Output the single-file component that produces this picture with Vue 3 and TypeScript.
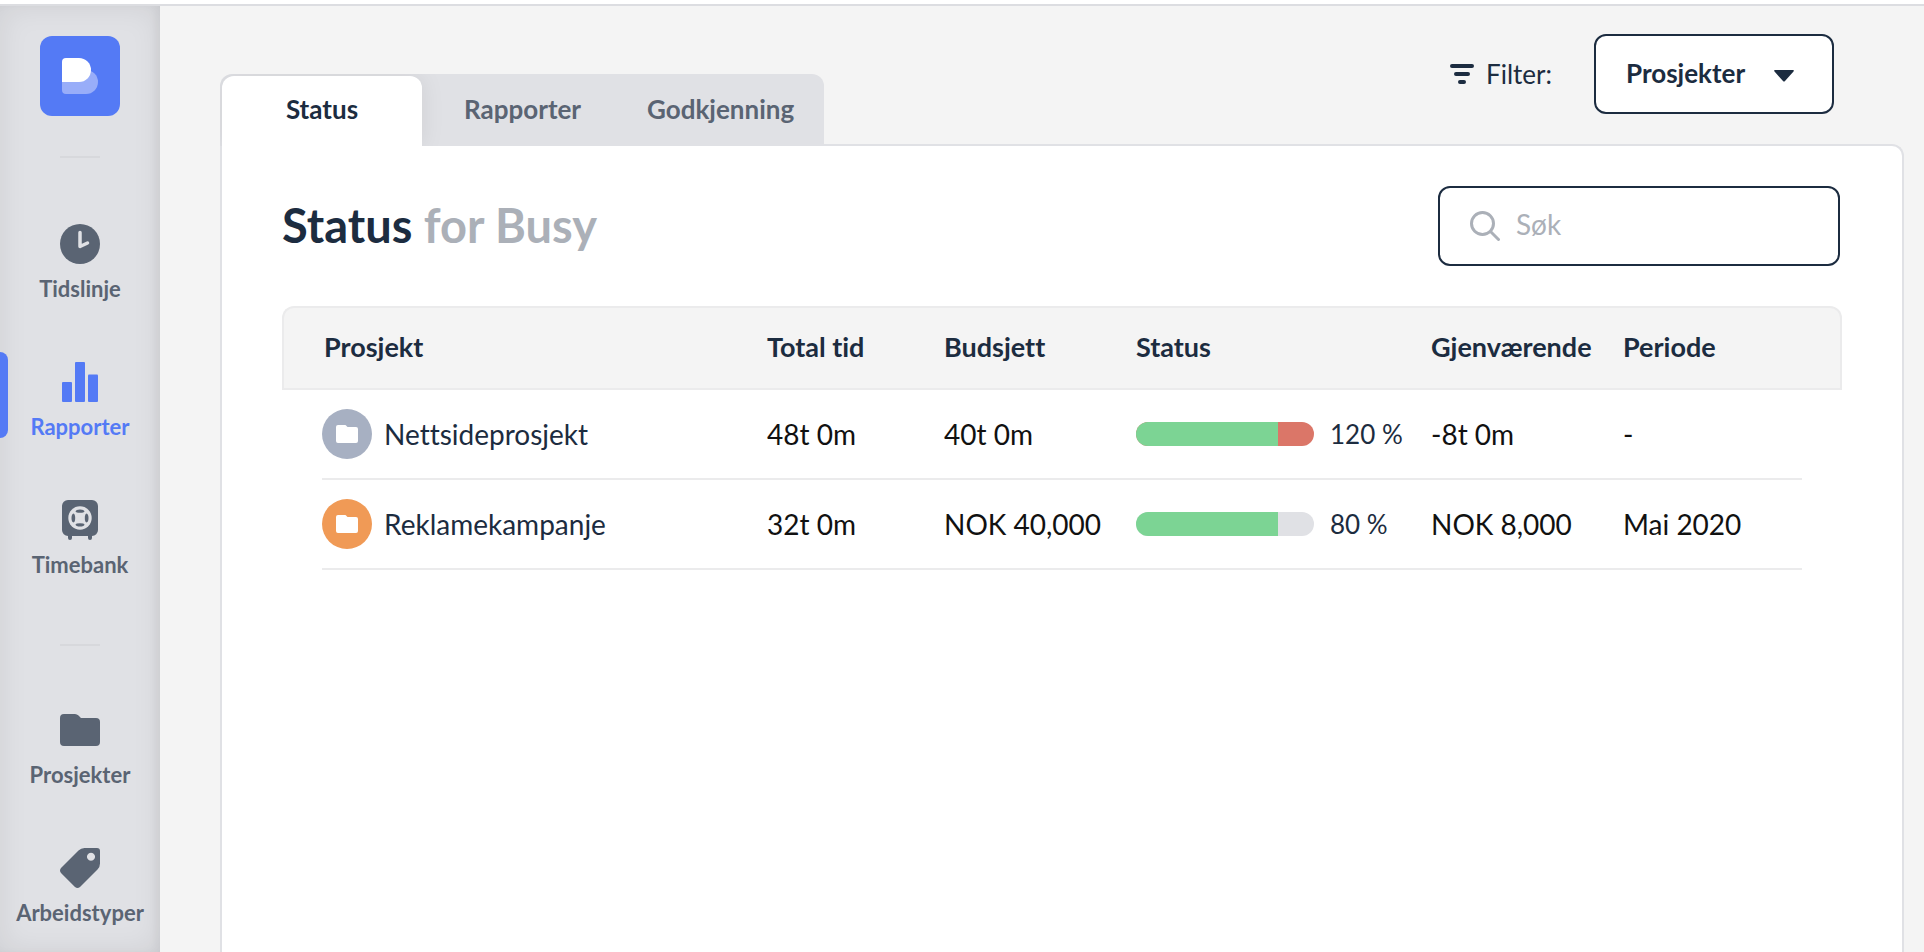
<script setup lang="ts">
import { ref } from 'vue'

interface NavItem {
  label: string
  icon: 'clock' | 'chart' | 'safe' | 'folder' | 'tag'
}

interface Project {
  name: string
  tone: 'slate' | 'orange'
  total: string
  budget: string
  percent: number
  remaining: string
  period: string
}

const navGroups: NavItem[][] = [
  [
    { label: 'Tidslinje', icon: 'clock' },
    { label: 'Rapporter', icon: 'chart' },
    { label: 'Timebank', icon: 'safe' },
  ],
  [
    { label: 'Prosjekter', icon: 'folder' },
    { label: 'Arbeidstyper', icon: 'tag' },
  ],
]

const activeNav = ref('Rapporter')
const tabs = ['Status', 'Rapporter', 'Godkjenning']
const activeTab = ref('Status')
const filter = ref('Prosjekter')
const search = ref('')

const projects: Project[] = [
  { name: 'Nettsideprosjekt', tone: 'slate', total: '48t 0m', budget: '40t 0m', percent: 120, remaining: '-8t 0m', period: '-' },
  { name: 'Reklamekampanje', tone: 'orange', total: '32t 0m', budget: 'NOK 40,000', percent: 80, remaining: 'NOK 8,000', period: 'Mai 2020' },
]

/* Over budget, the excess is shown in red at the end of the bar. */
const filled = (percent: number): number => (percent > 100 ? 200 - percent : percent)
</script>

<template>
  <div class="app">
    <aside class="sidebar">
      <a class="logo" href="#" aria-label="Busy">
        <svg viewBox="0 0 80 80" width="80" height="80" aria-hidden="true">
          <path d="M46 34a12 12 0 0 1 0 24H26a4 4 0 0 1-4-4V34z" fill="#98adf9" />
          <path d="M26 22h13a12 12 0 0 1 0 24H22V26a4 4 0 0 1 4-4z" fill="#fff" />
        </svg>
      </a>
      <nav class="nav">
        <div v-for="(group, g) in navGroups" :key="g" class="nav-group">
          <a
            v-for="item in group"
            :key="item.label"
            href="#"
            class="nav-item"
            :class="{ active: item.label === activeNav }"
            @click.prevent="activeNav = item.label"
          >
            <svg viewBox="0 0 40 40" width="40" height="40" aria-hidden="true">
              <template v-if="item.icon === 'clock'">
                <circle cx="20" cy="20" r="20" fill="currentColor" />
                <path d="M20 8.500V22.500L27.500 19" fill="none" stroke="#e0e1e5" stroke-width="3.500" stroke-linecap="round" stroke-linejoin="round" />
              </template>
              <g v-else-if="item.icon === 'chart'" fill="currentColor">
                <rect x="2" y="20" width="10" height="20" rx="1" />
                <rect x="15" y="0" width="10" height="40" rx="1" />
                <rect x="28" y="12.500" width="10" height="27.500" rx="1" />
              </g>
              <template v-else-if="item.icon === 'safe'">
                <path d="M8 0h24a6 6 0 0 1 6 6v24a6 6 0 0 1-6 6v2a2 2 0 0 1-4 0v-2H12v2a2 2 0 0 1-4 0v-2a6 6 0 0 1-6-6V6a6 6 0 0 1 6-6z" fill="currentColor" />
                <circle cx="20" cy="18" r="11.700" fill="#e0e1e5" />
                <g fill="currentColor">
                  <path d="M15.500 11.500Q16 9.500 20 9.500t4.500 2Q24 12.800 20 12.800t-4.500-1.300z" />
                  <path d="M15.500 24.500Q16 26.500 20 26.500t4.500-2Q24 23.200 20 23.200t-4.500 1.300z" />
                  <path d="M13.500 13.500Q11.500 14 11.500 18t2 4.500Q15.200 22 15.200 18t-1.700-4.500z" />
                  <path d="M26.500 13.500q2 .5 2 4.500t-2 4.500Q24.800 22 24.800 18t1.700-4.500z" />
                </g>
              </template>
              <path
                v-else-if="item.icon === 'folder'"
                d="M4 4h11q2 0 3.500 1.500L21 8h15a4 4 0 0 1 4 4v20a4 4 0 0 1-4 4H4a4 4 0 0 1-4-4V8a4 4 0 0 1 4-4z"
                fill="currentColor"
              />
              <path
                v-else
                fill="currentColor"
                fill-rule="evenodd"
                d="M24.500 0H37a3 3 0 0 1 3 3v12.500q0 3.500-2.500 6L20 39q-2.500 2-5 0L1 25q-2-2.500 0-5L18.500 2.500Q21 0 24.500 0zM31 4.800a4 4 0 1 0 .01 0z"
              />
            </svg>
            <span>{{ item.label }}</span>
          </a>
        </div>
      </nav>
    </aside>

    <main class="main">
      <header class="topbar">
        <div class="tabs" role="tablist">
          <button
            v-for="tab in tabs"
            :key="tab"
            type="button"
            role="tab"
            class="tab"
            :class="{ active: tab === activeTab }"
            :aria-selected="tab === activeTab"
            @click="activeTab = tab"
          >
            {{ tab }}
          </button>
        </div>
        <div class="filter">
          <label class="filter-label" for="filter">
            <svg viewBox="0 0 24 20" width="24" height="20" aria-hidden="true">
              <path d="M2 2h20M6 10h12M10 18h4" stroke="currentColor" stroke-width="4" stroke-linecap="round" />
            </svg>
            Filter:
          </label>
          <div class="select-box">
            <select id="filter" v-model="filter">
              <option>Prosjekter</option>
            </select>
            <svg class="caret" viewBox="0 0 20 12" width="20" height="12" aria-hidden="true">
              <path d="M1 0h18q1.500.5.500 1.500L11 11q-1 1-2 0L.500 1.500Q-.500.500 1 0z" fill="currentColor" />
            </svg>
          </div>
        </div>
      </header>

      <section class="panel">
        <div class="panel-head">
          <h1>Status <span>for Busy</span></h1>
          <label class="search">
            <svg viewBox="0 0 30 30" width="30" height="30" aria-hidden="true">
              <circle cx="12.500" cy="12.500" r="11" fill="none" stroke="currentColor" stroke-width="3" />
              <path d="M20.500 20.500l8 8" stroke="currentColor" stroke-width="3" stroke-linecap="round" />
            </svg>
            <input v-model="search" type="text" placeholder="Søk" aria-label="Søk" />
          </label>
        </div>

        <table>
          <colgroup>
            <col />
            <col class="col-total" />
            <col class="col-budget" />
            <col class="col-status" />
            <col class="col-remaining" />
            <col class="col-period" />
          </colgroup>
          <thead>
            <tr>
              <th scope="col">Prosjekt</th>
              <th scope="col">Total tid</th>
              <th scope="col">Budsjett</th>
              <th scope="col">Status</th>
              <th scope="col">Gjenværende</th>
              <th scope="col">Periode</th>
            </tr>
          </thead>
          <tbody>
            <tr v-for="project in projects" :key="project.name">
              <td>
                <div class="project">
                  <span class="badge" :class="project.tone">
                    <svg viewBox="0 0 22 18" width="22" height="18" aria-hidden="true">
                      <path d="M2 0h7q1 0 1.500 1l1 1H20a2 2 0 0 1 2 2v12a2 2 0 0 1-2 2H2a2 2 0 0 1-2-2V2a2 2 0 0 1 2-2z" fill="#fff" />
                    </svg>
                  </span>
                  {{ project.name }}
                </div>
              </td>
              <td>{{ project.total }}</td>
              <td>{{ project.budget }}</td>
              <td>
                <div class="status">
                  <div class="bar" :class="{ over: project.percent > 100 }">
                    <div class="bar-fill" :style="{ width: filled(project.percent) + '%' }"></div>
                  </div>
                  {{ project.percent }} %
                </div>
              </td>
              <td>{{ project.remaining }}</td>
              <td>{{ project.period }}</td>
            </tr>
          </tbody>
        </table>
      </section>
    </main>
  </div>
</template>

<style>
body {
  margin: 0;
  background: #fff;
}
</style>

<style scoped>
.app {
  box-sizing: border-box;
  display: flex;
  min-height: calc(100vh - 4px);
  margin-top: 4px;
  border-top: 2px solid #dcdde1;
  background: #f4f4f4;
  color: #1c2c40;
  font-family: Lato, "Open Sans", sans-serif;
  font-size: 28px;
  font-variant-ligatures: none;
}

.app *,
.app *::before {
  box-sizing: border-box;
}

.sidebar {
  display: flex;
  flex-direction: column;
  flex: 0 0 160px;
  align-items: center;
  padding-top: 30px;
  background: #e0e1e5;
  box-shadow:
    inset -6px 0 12px -4px rgba(0, 0, 0, 0.06),
    inset 0 0 30px rgba(0, 0, 0, 0.08);
}

.logo {
  display: block;
  height: 80px;
  border-radius: 12px;
  background: #547af5;
}

.nav {
  width: 100%;
}

.nav-group {
  display: flex;
  flex-direction: column;
  gap: 52px;
  padding-bottom: 28px;
}

.nav-group::before {
  content: "";
  align-self: center;
  width: 40px;
  height: 2px;
  margin: 40px 0 4px;
  background: #d7d8dc;
}

.nav-group + .nav-group::before {
  margin-bottom: 2px;
}

.nav-item {
  position: relative;
  display: flex;
  flex-direction: column;
  align-items: center;
  gap: 12px;
  height: 86px;
  padding-top: 10px;
  color: #5a6473;
  font-size: 22px;
  font-weight: 700;
  line-height: 26px;
  text-decoration: none;
}

.nav-item svg {
  flex: none;
}

.nav-item.active {
  color: #547af5;
}

.nav-item.active::before {
  content: "";
  position: absolute;
  top: 0;
  left: 0;
  width: 8px;
  height: 100%;
  border-radius: 0 8px 8px 0;
  background: #547af5;
}

.main {
  display: flex;
  flex: 1;
  flex-direction: column;
  min-width: 0;
  padding: 28px 20px 0 60px;
}

.topbar {
  display: flex;
  align-items: flex-start;
  justify-content: space-between;
  height: 112px;
}

/* The selected tab opens into the panel below it. */
.tabs {
  position: relative;
  z-index: 1;
  display: flex;
  align-self: flex-end;
  height: 72px;
  padding: 2px 0 0 2px;
  border-radius: 12px 12px 0 0;
  overflow: hidden;
  background: #e0e1e5;
}

.tab {
  padding: 0 30px 4px 28px;
  border: 0;
  background: none;
  color: #5a6473;
  font: inherit;
  font-size: 26px;
  font-weight: 700;
}

.tab:first-child {
  width: 200px;
  padding: 0 0 4px;
}

.tab:nth-child(2) {
  padding: 0 38px 4px 42px;
}

.tab.active {
  border-radius: 12px 12px 0 0;
  background: #fff;
  box-shadow: 0 0 24px rgba(0, 0, 0, 0.08);
  color: #1c2c40;
}

.filter {
  display: flex;
  align-items: center;
  gap: 42px;
  padding-right: 70px;
}

.filter-label {
  display: flex;
  align-items: center;
  gap: 12px;
  font-size: 26px;
}

.select-box {
  position: relative;
  width: 240px;
}

.select-box select {
  display: block;
  width: 100%;
  height: 80px;
  padding: 0 64px 2px 30px;
  border: 2px solid #1c2c40;
  border-radius: 12px;
  appearance: none;
  background: #fff;
  color: #1c2c40;
  font: inherit;
  font-size: 26px;
  font-weight: 700;
}

.caret {
  position: absolute;
  top: 36px;
  right: 40px;
  pointer-events: none;
}

.panel {
  flex: 1;
  margin-top: -2px;
  padding: 40px 60px 0;
  border: 2px solid #e0e1e5;
  border-bottom: 0;
  border-radius: 0 12px 0 0;
  background: #fff;
}

.panel-head {
  display: flex;
  align-items: center;
  justify-content: space-between;
  padding-right: 2px;
}

h1 {
  margin: 0;
  padding-bottom: 2px;
  font-size: 47px;
  font-weight: 700;
  line-height: 56px;
}

h1 span {
  color: #abb0b8;
}

.search {
  display: flex;
  align-items: center;
  gap: 16px;
  width: 402px;
  height: 80px;
  padding: 0 30px;
  border: 2px solid #1c2c40;
  border-radius: 12px;
  color: #abb0b8;
}

.search svg {
  flex: none;
}

.search input {
  flex: 1;
  min-width: 0;
  padding: 0 0 4px;
  border: 0;
  outline: 0;
  background: none;
  color: #1c2c40;
  font: inherit;
}

.search input::placeholder {
  color: #abb0b8;
  opacity: 1;
}

table {
  width: 100%;
  margin-top: 40px;
  border-collapse: separate;
  border-spacing: 0;
  table-layout: fixed;
}

.col-total {
  width: 177px;
}

.col-budget,
.col-remaining {
  width: 192px;
}

.col-status {
  width: 295px;
}

.col-period {
  width: 219px;
}

th {
  height: 84px;
  padding: 0 0 4px;
  border: 0 solid #ebebec;
  border-width: 2px 0;
  background: #f4f4f4;
  font-size: 27px;
  font-weight: 700;
  text-align: left;
}

th:first-child {
  padding-left: 40px;
  border-left-width: 2px;
  border-top-left-radius: 12px;
}

th:last-child {
  border-right-width: 2px;
  border-top-right-radius: 12px;
}

/* Row rules stop 40px short of the table's edges. */
td {
  height: 90px;
  padding: 0 0 2px;
  background: linear-gradient(#ebebec, #ebebec) left bottom / 100% 2px no-repeat;
  color: #111;
  white-space: nowrap;
}

td:first-child {
  padding-left: 40px;
  background-position: right bottom;
  background-size: calc(100% - 40px) 2px;
}

td:last-child {
  background-size: calc(100% - 40px) 2px;
}

.project,
.status {
  display: flex;
  align-items: center;
  color: #1c2c40;
}

.project {
  gap: 12px;
}

.status {
  gap: 16px;
  font-size: 26px;
}

.badge {
  display: flex;
  align-items: center;
  justify-content: center;
  width: 50px;
  height: 50px;
  border-radius: 50%;
}

.badge.slate {
  background: #a7b0c2;
}

.badge.orange {
  background: #f09a56;
}

.bar {
  width: 178px;
  height: 24px;
  border-radius: 12px;
  overflow: hidden;
  background: #e0e1e5;
}

.bar.over {
  background: #db7668;
}

.bar-fill {
  height: 100%;
  background: #7cd494;
}
</style>
